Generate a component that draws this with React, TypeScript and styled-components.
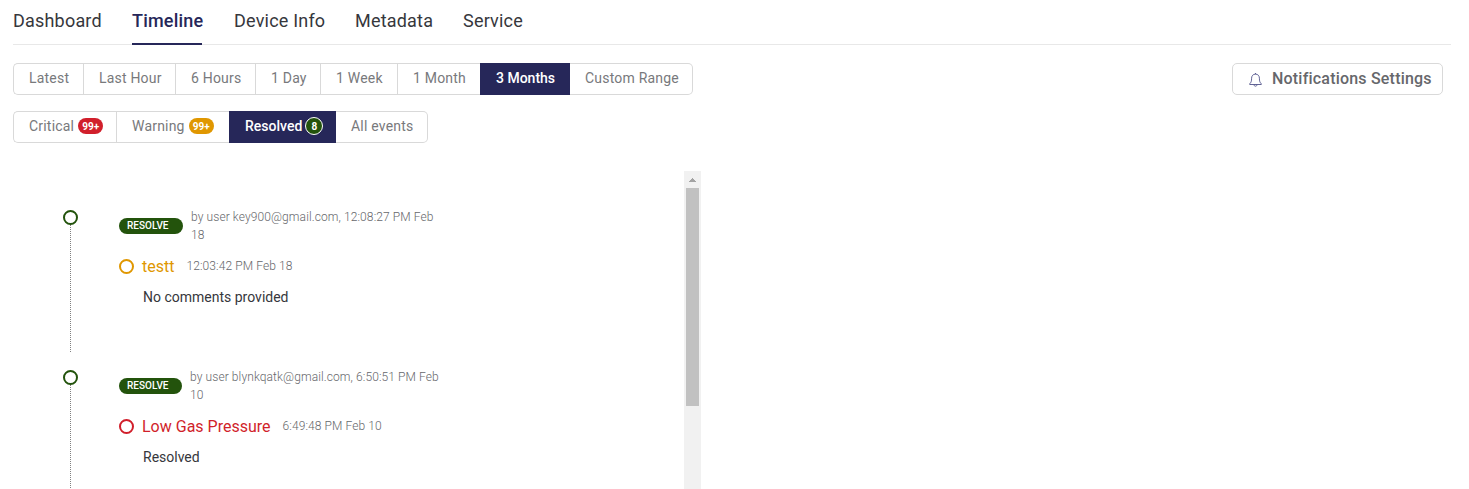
import React from "react";
import styled, { createGlobalStyle } from "styled-components";

const GlobalStyle = createGlobalStyle`
  * { box-sizing: border-box; }
  body {
    margin: 0;
    overflow: hidden;
    background: #fff;
    color: #36373c;
    font-family: Roboto, "Liberation Sans", sans-serif;
  }
  button { font-family: inherit; }
`;

const NAVY = "#262759";
const GREEN = "#23530c";
const RED = "#d11f2b";
const AMBER = "#e09700";

const Page = styled.main`
  height: 489px;
  padding-left: 13px;
  display: flex;
  flex-direction: column;
  overflow: hidden;
`;

const Tabs = styled.nav`
  display: flex;
  gap: 32px;
  width: 1438px;
  height: 45px;
  flex: none;
  border-bottom: 1px solid #e8e8e8;
`;

const Tab = styled.a<{ $width: number; $active?: boolean }>`
  width: ${(p) => p.$width}px;
  height: 45px;
  line-height: 41px;
  font-size: 18px;
  letter-spacing: 0.2px;
  white-space: nowrap;
  font-weight: ${(p) => (p.$active ? 500 : 400)};
  color: ${(p) => (p.$active ? NAVY : "#36373c")};
  border-bottom: ${(p) => (p.$active ? `2px solid ${NAVY}` : "none")};
`;

const Toolbar = styled.div`
  display: flex;
  justify-content: space-between;
  width: 1430px;
  margin-top: 18px;
  flex: none;
`;

const Group = styled.div`
  display: flex;
  height: 32px;
`;

const Filters = styled(Group)`
  margin-top: 16px;
  flex: none;
`;

const Option = styled.button<{ $width: number; $active?: boolean }>`
  display: flex;
  align-items: center;
  width: ${(p) => p.$width}px;
  height: 32px;
  padding: 0 0 2px 15px;
  border: 1px solid ${(p) => (p.$active ? NAVY : "#d9d9d9")};
  border-right-width: 0;
  background: ${(p) => (p.$active ? NAVY : "#fff")};
  color: ${(p) => (p.$active ? "#fff" : "#78797c")};
  font-size: 14px;
  font-weight: ${(p) => (p.$active ? 500 : 400)};
  letter-spacing: ${(p) => (p.$active ? 0 : 0.2)}px;
  white-space: nowrap;
  &:first-child { border-radius: 5px 0 0 5px; }
  &:last-child {
    border-left-width: 0;
    border-right-width: 1px;
    border-radius: 0 5px 5px 0;
  }
`;

const Count = styled.span<{ $color: string; $round?: boolean }>`
  display: flex;
  align-items: center;
  justify-content: center;
  width: ${(p) => (p.$round ? 18 : 25)}px;
  height: ${(p) => (p.$round ? 18 : 16)}px;
  margin-left: ${(p) => (p.$round ? 3 : 4)}px;
  border: ${(p) => (p.$round ? "1px solid #fff" : "none")};
  border-radius: 9px;
  background: ${(p) => p.$color};
  color: #fff;
  font-size: 10px;
  font-weight: 700;
  letter-spacing: 0;
`;

const SettingsButton = styled.button`
  display: flex;
  align-items: center;
  gap: 9px;
  width: 211px;
  height: 32px;
  padding: 0 0 2px 15px;
  border: 1px solid #d9d9d9;
  border-radius: 5px;
  background: #fff;
  color: #66676b;
  font-size: 16px;
  font-weight: 500;
  letter-spacing: 0.2px;
  white-space: nowrap;
  svg { margin-top: 3px; flex: none; }
`;

const ScrollPanel = styled.section`
  display: flex;
  justify-content: space-between;
  width: 688px;
  height: 318px;
  margin-top: 28px;
  flex: none;
`;

const Events = styled.div`
  width: 440px;
  height: 318px;
  padding: 39px 0 0 50px;
  overflow: hidden;
`;

const Event = styled.article`
  display: flex;
  gap: 41px;
  height: 160px;
`;

const Rail = styled.div`
  display: flex;
  flex-direction: column;
  align-items: center;
  width: 15px;
`;

const Ring = styled.span<{ $color: string }>`
  width: 15px;
  height: 15px;
  flex: none;
  border: 2px solid ${(p) => p.$color};
  border-radius: 50%;
`;

const Line = styled.span`
  width: 1px;
  height: 127px;
  background: repeating-linear-gradient(#808080 0 1px, transparent 1px 2px);
`;

const Details = styled.div`
  width: 325px;
`;

const Resolution = styled.div`
  display: flex;
  align-items: center;
  gap: 8px;
  height: 36px;
  margin-top: -2px;
`;

const Tag = styled.span<{ $width: number }>`
  width: ${(p) => p.$width}px;
  height: 16px;
  flex: none;
  padding-left: 8px;
  border-radius: 8px;
  background: ${GREEN};
  color: #fff;
  font-size: 10px;
  font-weight: 500;
  line-height: 16px;
`;

const Meta = styled.span`
  color: #66676b;
  font-size: 12px;
  font-weight: 300;
  line-height: 18px;
  letter-spacing: 0.1px;
  white-space: nowrap;
`;

const Headline = styled.div`
  display: flex;
  align-items: center;
  height: 24px;
  margin-top: 10px;
`;

const Title = styled.span<{ $color: string }>`
  margin: 0 12px 0 8px;
  color: ${(p) => p.$color};
  font-size: 16px;
  white-space: nowrap;
`;

const Comment = styled.p`
  margin: 9px 0 0 24px;
  font-size: 14px;
  line-height: 20px;
`;

const Scrollbar = styled.div`
  display: flex;
  flex-direction: column;
  align-items: center;
  width: 17px;
  height: 318px;
  background: #f1f1f1;
  svg { flex: none; }
`;

const Thumb = styled.div`
  width: 13px;
  height: 218px;
  background: #c1c1c1;
`;

const BellIcon = () => (
  <svg width="15" height="16" viewBox="0 0 15 16" fill="none" stroke="#50528a" strokeWidth="0.9">
    <path d="M7.5 1v1.2M7.5 2.1C5 2.1 3.6 4 3.6 6.2c0 3-.5 4.300-1.900 5.600v.7h11.600v-.7c-1.400-1.300-1.900-2.600-1.900-5.600 0-2.200-1.400-4.100-3.900-4.100Z" />
    <path d="M6 12.700c.1 1 .7 1.500 1.500 1.500s1.400-.5 1.500-1.500" />
  </svg>
);

const ranges = [
  { label: "Latest", width: 70 },
  { label: "Last Hour", width: 92 },
  { label: "6 Hours", width: 80 },
  { label: "1 Day", width: 65 },
  { label: "1 Week", width: 77 },
  { label: "1 Month", width: 83 },
  { label: "3 Months", width: 90, active: true },
  { label: "Custom Range", width: 123 },
];

const tabs = [
  { label: "Dashboard", width: 87 },
  { label: "Timeline", width: 70, active: true },
  { label: "Device Info", width: 89 },
  { label: "Metadata", width: 76 },
  { label: "Service", width: 60 },
];

const events = [
  {
    tagWidth: 64,
    by: ["by user key900@gmail.com, 12:08:27 PM Feb", "18"],
    title: "testt",
    color: AMBER,
    time: "12:03:42 PM Feb 18",
    comment: "No comments provided",
  },
  {
    tagWidth: 63,
    by: ["by user blynkqatk@gmail.com, 6:50:51 PM Feb", "10"],
    title: "Low Gas Pressure",
    color: RED,
    time: "6:49:48 PM Feb 10",
    comment: "Resolved",
  },
];

export default function App() {
  return (
    <Page>
      <GlobalStyle />
      <Tabs>
        {tabs.map((t) => (
          <Tab key={t.label} $width={t.width} $active={t.active}>{t.label}</Tab>
        ))}
      </Tabs>
      <Toolbar>
        <Group>
          {ranges.map((r) => (
            <Option key={r.label} $width={r.width} $active={r.active}>{r.label}</Option>
          ))}
        </Group>
        <SettingsButton><BellIcon />Notifications Settings</SettingsButton>
      </Toolbar>
      <Filters>
        <Option $width={103}>Critical<Count $color={RED}>99+</Count></Option>
        <Option $width={113}>Warning<Count $color={AMBER}>99+</Count></Option>
        <Option $width={107} $active>Resolved<Count $color={GREEN} $round>8</Count></Option>
        <Option $width={92}>All events</Option>
      </Filters>
      <ScrollPanel>
        <Events>
          {events.map((e) => (
            <Event key={e.title}>
              <Rail><Ring $color={GREEN} /><Line /></Rail>
              <Details>
                <Resolution>
                  <Tag $width={e.tagWidth}>RESOLVE</Tag>
                  <Meta>{e.by[0]}<br />{e.by[1]}</Meta>
                </Resolution>
                <Headline>
                  <Ring $color={e.color} />
                  <Title $color={e.color}>{e.title}</Title>
                  <Meta>{e.time}</Meta>
                </Headline>
                <Comment>{e.comment}</Comment>
              </Details>
            </Event>
          ))}
        </Events>
        <Scrollbar>
          <svg width="17" height="17" viewBox="0 0 17 17" shapeRendering="crispEdges">
            <path d="M5 11h7v-1h-1V9h-1V8H9V7H8v1H7v1H6v1H5Z" fill="#a3a3a3" />
          </svg>
          <Thumb />
        </Scrollbar>
      </ScrollPanel>
    </Page>
  );
}
